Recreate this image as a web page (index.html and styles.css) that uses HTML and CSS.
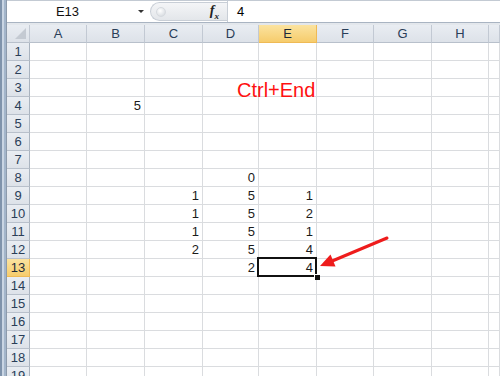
FILE: index.html
```html
<!DOCTYPE html>
<html lang="en">
<head>
    <meta charset="UTF-8">
    <title>Ctrl+End</title>
    <link rel="stylesheet" href="styles.css">
</head>
<body>
<div class="window">
    <div class="frame"></div>
    <div class="main">
        <div class="formula-bar">
            <div class="name-box"><span class="name">E13</span><span class="drop"></span></div>
            <div class="fx-box"><span class="knob"></span><span class="fx"><i>f</i><sub>x</sub></span></div>
            <div class="formula">4</div>
        </div>
        <div class="sheet">
            <div class="corner"><span class="tri"></span></div><div class="hd">A</div><div class="hd">B</div><div class="hd">C</div><div class="hd">D</div><div class="hd active">E</div><div class="hd">F</div><div class="hd">G</div><div class="hd">H</div><div class="hd"></div>
            <div class="rh">1</div><div class="c"></div><div class="c"></div><div class="c"></div><div class="c"></div><div class="c"></div><div class="c"></div><div class="c"></div><div class="c"></div><div class="c"></div>
            <div class="rh">2</div><div class="c"></div><div class="c"></div><div class="c"></div><div class="c"></div><div class="c"></div><div class="c"></div><div class="c"></div><div class="c"></div><div class="c"></div>
            <div class="rh">3</div><div class="c"></div><div class="c"></div><div class="c"></div><div class="c"></div><div class="c"></div><div class="c"></div><div class="c"></div><div class="c"></div><div class="c"></div>
            <div class="rh">4</div><div class="c"></div><div class="c">5</div><div class="c"></div><div class="c"></div><div class="c"></div><div class="c"></div><div class="c"></div><div class="c"></div><div class="c"></div>
            <div class="rh">5</div><div class="c"></div><div class="c"></div><div class="c"></div><div class="c"></div><div class="c"></div><div class="c"></div><div class="c"></div><div class="c"></div><div class="c"></div>
            <div class="rh">6</div><div class="c"></div><div class="c"></div><div class="c"></div><div class="c"></div><div class="c"></div><div class="c"></div><div class="c"></div><div class="c"></div><div class="c"></div>
            <div class="rh">7</div><div class="c"></div><div class="c"></div><div class="c"></div><div class="c"></div><div class="c"></div><div class="c"></div><div class="c"></div><div class="c"></div><div class="c"></div>
            <div class="rh">8</div><div class="c"></div><div class="c"></div><div class="c"></div><div class="c">0</div><div class="c"></div><div class="c"></div><div class="c"></div><div class="c"></div><div class="c"></div>
            <div class="rh">9</div><div class="c"></div><div class="c"></div><div class="c">1</div><div class="c">5</div><div class="c">1</div><div class="c"></div><div class="c"></div><div class="c"></div><div class="c"></div>
            <div class="rh">10</div><div class="c"></div><div class="c"></div><div class="c">1</div><div class="c">5</div><div class="c">2</div><div class="c"></div><div class="c"></div><div class="c"></div><div class="c"></div>
            <div class="rh">11</div><div class="c"></div><div class="c"></div><div class="c">1</div><div class="c">5</div><div class="c">1</div><div class="c"></div><div class="c"></div><div class="c"></div><div class="c"></div>
            <div class="rh">12</div><div class="c"></div><div class="c"></div><div class="c">2</div><div class="c">5</div><div class="c">4</div><div class="c"></div><div class="c"></div><div class="c"></div><div class="c"></div>
            <div class="rh active">13</div><div class="c"></div><div class="c"></div><div class="c"></div><div class="c">2</div><div class="c selected">4</div><div class="c"></div><div class="c"></div><div class="c"></div><div class="c"></div>
            <div class="rh">14</div><div class="c"></div><div class="c"></div><div class="c"></div><div class="c"></div><div class="c"></div><div class="c"></div><div class="c"></div><div class="c"></div><div class="c"></div>
            <div class="rh">15</div><div class="c"></div><div class="c"></div><div class="c"></div><div class="c"></div><div class="c"></div><div class="c"></div><div class="c"></div><div class="c"></div><div class="c"></div>
            <div class="rh">16</div><div class="c"></div><div class="c"></div><div class="c"></div><div class="c"></div><div class="c"></div><div class="c"></div><div class="c"></div><div class="c"></div><div class="c"></div>
            <div class="rh">17</div><div class="c"></div><div class="c"></div><div class="c"></div><div class="c"></div><div class="c"></div><div class="c"></div><div class="c"></div><div class="c"></div><div class="c"></div>
            <div class="rh">18</div><div class="c"></div><div class="c"></div><div class="c"></div><div class="c"></div><div class="c"></div><div class="c"></div><div class="c"></div><div class="c"></div><div class="c"></div>
            <div class="rh">19</div><div class="c"></div><div class="c"></div><div class="c"></div><div class="c"></div><div class="c"></div><div class="c"></div><div class="c"></div><div class="c"></div><div class="c"></div>

            <div class="note">Ctrl+End</div>
            <svg class="arrow" width="90" height="50" viewBox="0 0 90 50">
                <line x1="80" y1="13" x2="24" y2="36.5" stroke="#ee1c1c" stroke-width="3" stroke-linecap="round"/>
                <polygon points="13,41 28.5,41.5 23.5,29.5" fill="#ee1c1c"/>
            </svg>
        </div>
    </div>
</div>
</body>
</html>
```

FILE: styles.css
```css
body {
    margin: 0;
    font-family: "Liberation Sans", Arial, sans-serif;
    background-color: #fff;
}

.window {
    display: flex;
    width: 500px;
    height: 376px;
    overflow: hidden;
}

.frame {
    width: 7px;
    flex-shrink: 0;
    background: linear-gradient(to right, #7f93ab 0 2px, #c9d5e3 2px 4px, #a3b5ca 4px 6px, #8c9aab 6px 7px);
}

.main {
    flex: 1;
    display: flex;
    flex-direction: column;
    min-width: 0;
}

/* formula bar */

.formula-bar {
    display: flex;
    align-items: stretch;
    height: 21px;
    border-top: 1px solid #c3cad3;
    border-bottom: 1px solid #a9b4c2;
    margin-bottom: 2px;
    background-color: #fff;
    box-shadow: 0 2px 0 #e3e7ec;
}

.name-box {
    width: 143px;
    display: flex;
    align-items: center;
    font-size: 13px;
    color: #111;
}

.name {
    flex: 1;
    text-align: center;
    padding-right: 10px;
}

.drop {
    width: 0;
    height: 0;
    border-left: 3px solid transparent;
    border-right: 3px solid transparent;
    border-top: 3px solid #333;
    margin-right: 6px;
}

.fx-box {
    width: 76px;
    margin: 1px 0;
    display: flex;
    align-items: center;
    justify-content: space-between;
    border: 1px solid #c8ced6;
    border-right: none;
    border-radius: 10px 0 0 10px;
    background: linear-gradient(#f4f5f7, #e3e6ea);
}

.knob {
    width: 8px;
    height: 8px;
    margin-left: 5px;
    border-radius: 50%;
    background: radial-gradient(circle at 40% 35%, #fff, #cfd4da);
    border: 1px solid #d6dadf;
}

.fx {
    font-family: "Liberation Serif", serif;
    font-size: 14px;
    font-weight: bold;
    color: #222;
    margin-right: 8px;
}

.fx sub {
    font-size: 9px;
    font-style: italic;
}

.formula {
    flex: 1;
    display: flex;
    align-items: center;
    padding-left: 9px;
    font-size: 13px;
    border-left: 1px solid #c8ced6;
}

/* sheet */

.sheet {
    position: relative;
    display: grid;
    grid-template-columns: 23px 57px 58px 58px 56px 58px 57px 58px 57px 1fr;
    grid-auto-rows: 18px;
    font-size: 13px;
}

.sheet > div {
    box-sizing: border-box;
}

.corner, .hd, .rh {
    background: linear-gradient(#e9edf2, #dde2e9);
    border-right: 1px solid #c2c9d3;
    border-bottom: 1px solid #b8c0cb;
    color: #2a3e58;
    display: flex;
    align-items: center;
    justify-content: center;
}

.corner {
    position: relative;
}

.tri {
    position: absolute;
    right: 3px;
    bottom: 3px;
    width: 0;
    height: 0;
    border-left: 11px solid transparent;
    border-bottom: 11px solid #c4cad2;
}

.hd.active, .rh.active {
    background: linear-gradient(#fbe3a0, #f6cc6c);
    border-right-color: #efba55;
    border-bottom-color: #efba55;
    color: #1d2a3a;
}

.rh {
    border-right-color: #a9b3bf;
}

.c {
    border-right: 1px solid #dadcdf;
    border-bottom: 1px solid #dadcdf;
    display: flex;
    align-items: flex-end;
    justify-content: flex-end;
    padding: 0 3px 1px 0;
    color: #1b1b1b;
}

.c.selected {
    position: relative;
}

.c.selected::before {
    content: "";
    position: absolute;
    left: -2px;
    top: -2px;
    right: -1px;
    bottom: -1px;
    border: 2px solid #111;
}

.c.selected::after {
    content: "";
    position: absolute;
    right: -4px;
    bottom: -4px;
    width: 5px;
    height: 5px;
    background-color: #111;
    border: 1px solid #fff;
    border-width: 1px 0 0 1px;
}

.note {
    position: absolute;
    left: 230px;
    top: 55px;
    font-size: 20px;
    line-height: 20px;
    color: #ff1010;
}

.arrow {
    position: absolute;
    left: 300px;
    top: 200px;
}
```
